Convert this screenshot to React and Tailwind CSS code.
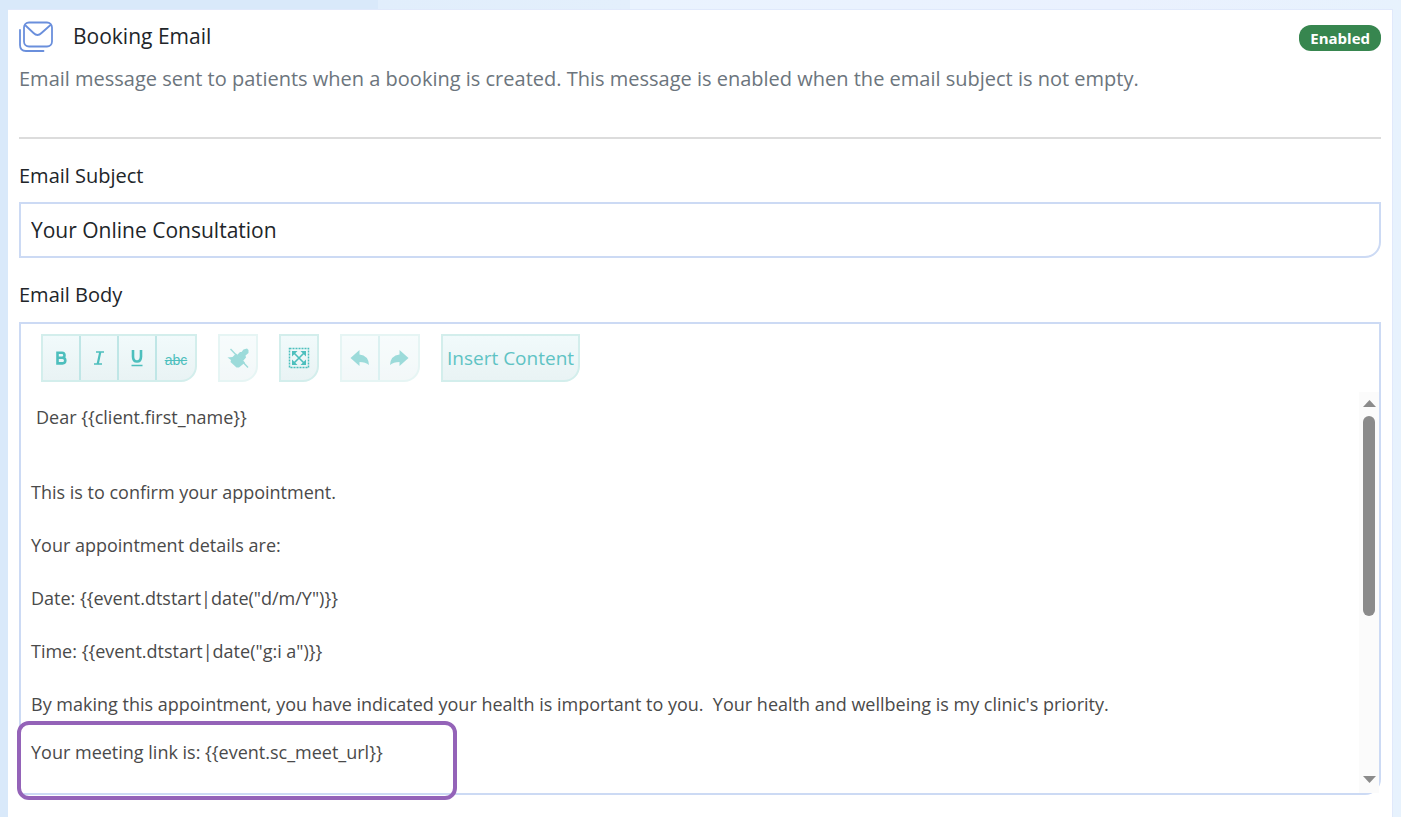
const paragraphs = [
  'This is to confirm your appointment.',
  'Your appointment details are:',
  'Date: {{event.dtstart|date("d/m/Y")}}',
  'Time: {{event.dtstart|date("g:i a")}}',
  "By making this appointment, you have indicated your health is important to you.\u00a0 Your health and wellbeing is my clinic's priority.",
];

function MailIcon() {
  return (
    <svg width="34" height="32" viewBox="0 0 34 32" fill="none" stroke="#6a8fdc" strokeWidth="1.800" strokeLinecap="round" aria-hidden="true">
      <rect x="5" y="1.500" width="28" height="24" rx="5" />
      <path d="M6 4 L14.500 12 Q18.500 16 22.500 12 L31.500 4" />
      <path d="M1 9 V24 Q1 30 7 30 H24.500" />
    </svg>
  );
}

function BoldIcon() {
  return (
    <svg width="22" height="22" viewBox="0 0 22 22" fill="none" stroke="currentColor" strokeWidth="2.600" aria-hidden="true">
      <path d="M6.500 5.800 H12 A2.500 2.500 0 0 1 12 10.800 H7 M7 10.800 H12.500 A2.800 2.800 0 0 1 12.500 16.400 H6.500 M7.500 4.500 V17.700" />
    </svg>
  );
}

function ItalicIcon() {
  return (
    <svg width="22" height="22" viewBox="0 0 22 22" fill="none" stroke="currentColor" aria-hidden="true">
      <path d="M8 5 H16 M6 17 H14" strokeWidth="1.600" />
      <path d="M12.300 5 L9.700 17" strokeWidth="2.200" />
    </svg>
  );
}

function UnderlineIcon() {
  return (
    <svg width="22" height="22" viewBox="0 0 22 22" fill="none" stroke="currentColor" aria-hidden="true">
      <path d="M7 3 V9.500 Q7 14.500 11 14.500 Q15 14.500 15 9.500 V3" strokeWidth="2.600" />
      <path d="M5.500 18.500 H16.500" strokeWidth="1.600" />
    </svg>
  );
}

function ClearFormatIcon() {
  return (
    <svg width="22" height="22" viewBox="0 0 22 22" fill="currentColor" aria-hidden="true">
      <path d="M0.500 10.500 L5.500 10 L9 6.500 L18 15.500 L12 20.500 L9.500 20.500 L3.500 15 L4 13 Z" />
      <path d="M10 8 L13 5 L14.500 5 L16.500 2.500 L20 1.500 L21.500 3 L21.500 6 L18.500 8.500 L19 10.500 L16 14 Z" />
      <path d="M3.500 2 L21 20.500" stroke="currentColor" strokeWidth="1.400" />
    </svg>
  );
}

function FullScreenIcon() {
  return (
    <svg width="22" height="22" viewBox="0 0 22 22" fill="currentColor" aria-hidden="true">
      <rect x="1.500" y="1.500" width="19" height="19" fill="none" stroke="currentColor" strokeWidth="1.500" strokeDasharray="2 1" />
      <path d="M6 6 L16 16 M16 6 L6 16" stroke="currentColor" strokeWidth="1.600" />
      <path d="M4 4 H9.500 L4 9.500 Z M18 4 V9.500 L12.500 4 Z M4 18 V12.500 L9.500 18 Z M18 18 H12.500 L18 12.500 Z" />
    </svg>
  );
}

function ArrowIcon({ flip }) {
  return (
    <svg width="22" height="22" viewBox="0 0 22 22" fill="currentColor" className={flip ? '-scale-x-100' : ''} aria-hidden="true">
      <path d="M1.500 11 L10.500 3 V7.500 Q19.500 8.500 20 18 Q16.500 15 10.500 15 V19 Z" />
    </svg>
  );
}

const buttonGroups = [
  [
    { label: 'Bold', icon: <BoldIcon /> },
    { label: 'Italic', icon: <ItalicIcon /> },
    { label: 'Underline', icon: <UnderlineIcon /> },
    { label: 'Strikethrough', icon: <s className="mt-1 font-['Liberation_Sans',sans-serif] text-sm">abc</s> },
  ],
  [{ label: 'Clear formatting', icon: <ClearFormatIcon />, disabled: true }],
  [{ label: 'Full screen', icon: <FullScreenIcon /> }],
  [
    { label: 'Undo', icon: <ArrowIcon />, disabled: true },
    { label: 'Redo', icon: <ArrowIcon flip />, disabled: true },
  ],
];

function Toolbar() {
  return (
    <div className="flex flex-wrap gap-[21px] px-5 py-[10px]">
      {buttonGroups.map((group) => (
        <div
          key={group[0].label}
          className={`flex h-12 divide-x-2 divide-[#bfe6e6] overflow-hidden rounded-br-2xl border-2 border-[#d3eeec] bg-linear-to-b from-[#f1fafb] to-[#e9f3f4] ${group[0].disabled ? 'opacity-55' : ''}`}
        >
          {group.map((b) => (
            <button
              key={b.label}
              type="button"
              aria-label={b.label}
              disabled={b.disabled}
              className={`flex items-center justify-center text-[#4dbfbd] ${group.length > 1 ? 'w-[38px]' : 'w-9'}`}
            >
              {b.icon}
            </button>
          ))}
        </div>
      ))}
      <button type="button" className="h-12 rounded-br-2xl border-2 border-[#d3eeec] bg-linear-to-b from-[#f1fafb] to-[#e9f3f4] px-1 text-[19px] text-[#5fc3c4]">
        Insert Content
      </button>
    </div>
  );
}

function ScrollTrack() {
  return (
    <div className="flex w-5 shrink-0 flex-col items-center justify-between bg-[#fbfbfb] pt-2 pb-[10px] text-[#8b8b8b]" aria-hidden="true">
      <div className="flex flex-col items-center gap-[9px]">
        <svg width="13" height="7" viewBox="0 0 13 7" fill="currentColor"><path d="M6.500 0 L13 7 H0 Z" /></svg>
        <div className="h-[200px] w-3 rounded-full bg-[#8b8b8b]" />
      </div>
      <svg width="13" height="7" viewBox="0 0 13 7" fill="currentColor"><path d="M0 0 H13 L6.500 7 Z" /></svg>
    </div>
  );
}

export default function App() {
  return (
    <div className="flex min-h-screen flex-col bg-[linear-gradient(to_right,#d9e9fa_27%,#e1eefc_27%,#e3effc_45%,#eaf3fe_45%,#eaf1fe_80%,#e7f2fd)] px-2 pt-[9px] font-['Open_Sans',sans-serif]">
      <main className="grow border-t border-r border-[#e0e9fb] bg-white px-[11px] pt-[10px] pb-[22px]">
        <header className="border-b-2 border-[#dcdcdc] pb-[42px]">
          <div className="flex h-[34px] items-center">
            <MailIcon />
            <h1 className="mb-[2px] ml-5 text-[21px] leading-8 text-[#212529]">Booking Email</h1>
            <span className="mt-[2px] ml-auto rounded-xl bg-[#37864f] px-[11px] text-[15px] leading-[26px] font-bold text-white">Enabled</span>
          </div>
          <p className="mt-[9px] text-xl leading-8 text-[#6c757d]">
            Email message sent to patients when a booking is created. This message is enabled when the email subject is not empty.
          </p>
        </header>

        <form>
          <label htmlFor="subject" className="mt-[21px] block text-xl leading-8 text-[#212529]">Email Subject</label>
          <input
            id="subject"
            type="text"
            defaultValue="Your Online Consultation"
            className="mt-[10px] block h-14 w-full rounded-br-2xl border-2 border-[#ccdaf4] bg-white px-[10px] text-[21px] text-[#212529] outline-none"
          />

          <div id="body-label" className="mt-[21px] text-xl leading-8 text-[#212529]">Email Body</div>
          <div className="mt-[11px] rounded-br-2xl border-2 border-[#ccdaf4] bg-white">
            <Toolbar />
            <div className="flex">
              <div
                role="textbox"
                aria-multiline="true"
                aria-labelledby="body-label"
                contentEditable
                suppressContentEditableWarning
                className="min-w-0 grow px-[10px] pt-[9px] text-lg leading-8 text-[#4a4a4a] outline-none"
              >
                <p className="mb-[43px] pl-[5px]">{'Dear {{client.first_name}}'}</p>
                {paragraphs.map((p) => (
                  <p key={p} className="mb-[21px] last-of-type:mb-0">{p}</p>
                ))}
                <div className="relative pt-4 pb-[25px]">
                  <span>{'Your meeting link is: {{event.sc_meet_url}}'}</span>
                  <span className="pointer-events-none absolute top-px -left-[14px] h-[79px] w-[440px] rounded-xl border-4 border-[#9463b8]" />
                </div>
              </div>
              <ScrollTrack />
            </div>
          </div>
        </form>
      </main>
    </div>
  );
}
